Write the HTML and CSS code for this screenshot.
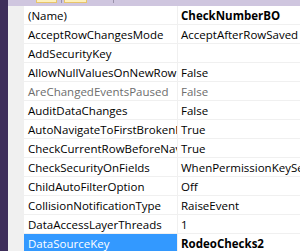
FILE: index.html
```
<!DOCTYPE html>
<html lang="en">
<head>
  <meta charset="UTF-8" />
  <title>Properties</title>
  <link rel="stylesheet" href="styles.css">
</head>
<body>
  <div class="ventana">
    <div class="borde"></div>
    <div class="panel">
      <div class="barra">
        <span class="boton boton-1"></span>
        <span class="sep sep-1"></span>
        <span class="boton boton-2"></span>
        <span class="sep sep-2"></span>
      </div>

      <div class="grilla">
        <div class="fila"><div class="nombre">(Name)</div><div class="valor bold">CheckNumberBO</div></div>
        <div class="fila"><div class="nombre">AcceptRowChangesMode</div><div class="valor">AcceptAfterRowSaved</div></div>
        <div class="fila"><div class="nombre">AddSecurityKey</div><div class="valor"></div></div>
        <div class="fila"><div class="nombre">AllowNullValuesOnNewRow</div><div class="valor">False</div></div>
        <div class="fila solo-lectura"><div class="nombre">AreChangedEventsPaused</div><div class="valor">False</div></div>
        <div class="fila"><div class="nombre">AuditDataChanges</div><div class="valor">False</div></div>
        <div class="fila"><div class="nombre">AutoNavigateToFirstBrokenRule</div><div class="valor">True</div></div>
        <div class="fila"><div class="nombre">CheckCurrentRowBeforeNavigate</div><div class="valor">True</div></div>
        <div class="fila"><div class="nombre">CheckSecurityOnFields</div><div class="valor">WhenPermissionKeySet</div></div>
        <div class="fila"><div class="nombre">ChildAutoFilterOption</div><div class="valor">Off</div></div>
        <div class="fila"><div class="nombre">CollisionNotificationType</div><div class="valor">RaiseEvent</div></div>
        <div class="fila"><div class="nombre">DataAccessLayerThreads</div><div class="valor">1</div></div>
        <div class="fila activa"><div class="nombre">DataSourceKey</div><div class="valor bold">RodeoChecks2</div></div>
      </div>
    </div>
  </div>
</body>
</html>
```
FILE: styles.css
```
html, body {
  margin: 0;
  padding: 0;
  overflow: hidden;
}

body {
  font-family: 'Open Sans', sans-serif;
  font-size: 11.5px;
  color: #000;
  background-color: #fff;
}

.ventana {
  display: flex;
  height: 251px;
}

.borde {
  width: 8px;
  background-color: #3e2e5a;
  flex-shrink: 0;
}

.panel {
  flex: 1;
  display: flex;
  flex-direction: column;
  background-color: #f0f0f0;
}

/* barra de herramientas, casi cortada arriba */
.barra {
  height: 6px;
  background-color: #cfc6df;
  display: flex;
  align-items: flex-start;
  flex-shrink: 0;
}

.boton {
  height: 2px;
  background-color: #fdf0bd;
  border: 1px solid #e8c56a;
  border-top: none;
}

.boton-1 {
  width: 19px;
  margin-left: 28px;
}

.boton-2 {
  width: 21px;
  margin-left: 2px;
  order: 2;
}

.sep {
  width: 1px;
  height: 3px;
  background-color: #9a92aa;
}

.sep-1 {
  margin-left: 4px;
  order: 1;
}

.sep-2 {
  margin-left: 26px;
  order: 3;
}

.grilla {
  padding-left: 16px;
}

.fila {
  display: grid;
  grid-template-columns: 154px 1fr;
  height: 18px;
  line-height: 19px;
  border-bottom: 1px solid #f0f0f0;
  background-color: #fff;
}

.nombre,
.valor {
  white-space: nowrap;
  overflow: hidden;
}

.nombre {
  padding-left: 4px;
  border-right: 1px solid #f0f0f0;
}

.valor {
  padding-left: 3px;
}

.bold {
  font-weight: 700;
}

.solo-lectura .nombre,
.solo-lectura .valor {
  color: #6d6d6d;
}

.activa .nombre {
  background-color: #3399ff;
  color: #fff;
}
```
